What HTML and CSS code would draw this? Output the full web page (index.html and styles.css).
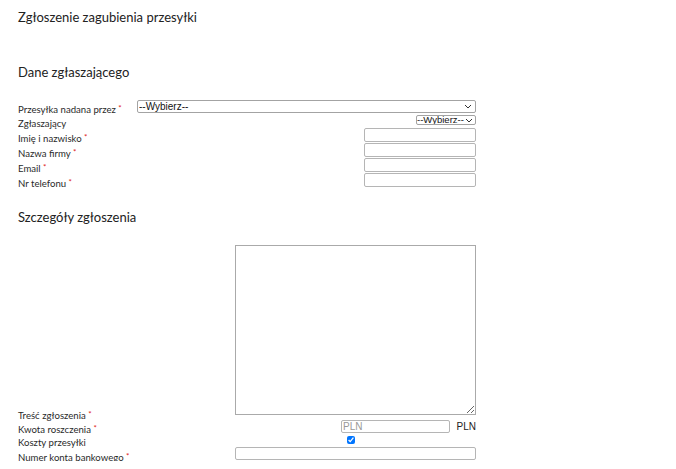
FILE: index.html
```html
<!DOCTYPE html>
<html lang="pl">
<head>
    <meta charset="UTF-8">
    <title>Zgłoszenie zagubienia przesyłki</title>
    <link rel="stylesheet" href="styles.css">
</head>
<body>
    <div class="page">
        <h1 class="page-title">Zgłoszenie zagubienia przesyłki</h1>

        <h2 class="section-title">Dane zgłaszającego</h2>
        <table class="form-table">
            <tr>
                <td class="label label-tight">Przesyłka nadana przez <span class="req">*</span></td>
                <td class="value"><select class="select-wide"><option>--Wybierz--</option></select></td>
            </tr>
            <tr>
                <td class="label">Zgłaszający</td>
                <td class="value"><select class="select-small"><option>--Wybierz--</option></select></td>
            </tr>
            <tr>
                <td class="label">Imię i nazwisko <span class="req">*</span></td>
                <td class="value"><input type="text" class="input-short"></td>
            </tr>
            <tr>
                <td class="label">Nazwa firmy <span class="req">*</span></td>
                <td class="value"><input type="text" class="input-short"></td>
            </tr>
            <tr>
                <td class="label">Email <span class="req">*</span></td>
                <td class="value"><input type="text" class="input-short"></td>
            </tr>
            <tr>
                <td class="label">Nr telefonu <span class="req">*</span></td>
                <td class="value"><input type="text" class="input-short"></td>
            </tr>
        </table>

        <h2 class="section-title details">Szczegóły zgłoszenia</h2>
        <table class="form-table">
            <tr>
                <td class="label label-bottom">Treść zgłoszenia <span class="req">*</span></td>
                <td class="value"><textarea class="textarea"></textarea></td>
            </tr>
            <tr>
                <td class="label label-tight">Kwota roszczenia <span class="req">*</span></td>
                <td class="value"><input type="text" class="input-amount" placeholder="PLN"><span class="currency">PLN</span></td>
            </tr>
            <tr>
                <td class="label label-top">Koszty przesyłki</td>
                <td class="value"><input type="checkbox" class="checkbox" checked></td>
            </tr>
            <tr>
                <td class="label">Numer konta bankowego <span class="req">*</span></td>
                <td class="value"><input type="text" class="input-long"></td>
            </tr>
        </table>
    </div>
</body>
</html>
```

FILE: styles.css
```css
body {
    margin: 0;
    font-family: Lato, sans-serif;
    color: #222222;
    background-color: #ffffff;
}

.page {
    padding: 9px 0 0 18px;
    width: 458px;
}

.page-title {
    font-size: 13px;
    font-weight: normal;
    margin: 0;
    line-height: 17px;
}

.section-title {
    font-size: 13px;
    font-weight: normal;
    margin: 38px 0 19px;
    line-height: 17px;
}

.section-title.details {
    margin: 21px 0 19px;
}

.form-table {
    width: 100%;
    border-collapse: collapse;
}

.form-table td {
    padding: 0;
    vertical-align: top;
}

.label {
    white-space: nowrap;
    color: #2a2a2a;
    font-size: 9.6px;
    line-height: 6px;
    padding-top: 8px !important;
}

.label-tight {
    padding-top: 7px !important;
}

.label-top {
    padding-top: 5px !important;
}

.form-table .label-bottom {
    vertical-align: bottom;
    padding: 0 0 1px !important;
}

.value {
    text-align: right;
    width: 100%;
    line-height: 0;
}

.req {
    color: #e02020;
    font-size: 8px;
    line-height: 0;
    vertical-align: 2px;
}

select,
input,
textarea {
    font-family: "Liberation Sans", Arial, sans-serif;
    font-size: 10px;
    margin: 0;
    box-sizing: border-box;
    color: #111111;
    vertical-align: top;
}

select {
    appearance: none;
    border: 1px solid #a3a3a3;
    border-radius: 2px;
    background: #ffffff url("data:image/svg+xml,%3Csvg xmlns='http://www.w3.org/2000/svg' width='8' height='5' viewBox='0 0 8 5'%3E%3Cpath d='M1 1l3 3 3-3' fill='none' stroke='%23333' stroke-width='1'/%3E%3C/svg%3E") no-repeat right 3px center;
    padding: 0 12px 0 1px;
    line-height: 10px;
}

.select-wide {
    width: 339px;
    height: 13px;
}

.select-small {
    width: 60px;
    height: 10px;
    margin: 2px 0 3px;
    padding: 0 9px 0 0;
    font-size: 9.5px;
    line-height: 8px;
    background-position: right 2px center;
}

.input-short,
.input-amount,
.input-long {
    padding: 0 1px;
    border: 1px solid #b5b5b5;
    border-radius: 2px;
}

.input-short {
    width: 112px;
    height: 14px;
    margin-bottom: 1px;
}

.input-amount {
    width: 109px;
    height: 13px;
    margin-bottom: 2px;
}

.input-amount::placeholder {
    color: #999999;
}

.input-long {
    width: 241px;
    height: 13px;
}

.currency {
    display: inline-block;
    width: 26px;
    font-family: "Liberation Sans", Arial, sans-serif;
    font-size: 10px;
    line-height: 13px;
    color: #222222;
    vertical-align: top;
}

.textarea {
    width: 241px;
    height: 170px;
    border: 1px solid #aaaaaa;
    resize: both;
    margin-bottom: 5px;
}

.checkbox {
    width: 8px;
    height: 8px;
    margin: 1px 121px 3px 0;
}
```
